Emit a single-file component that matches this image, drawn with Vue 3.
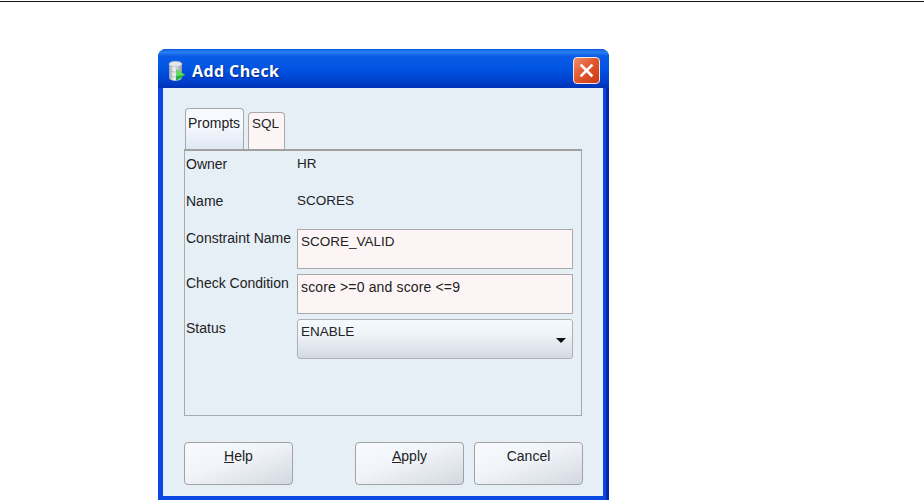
<template>
  <div class="page">
    <div class="rule"></div>

    <section class="window">
      <header class="titlebar">
        <svg class="app-icon" width="18" height="22" viewBox="0 0 18 22">
          <defs>
            <linearGradient id="can" x1="0" x2="1" y1="0" y2="0">
              <stop offset="0" stop-color="#9aa3ad" />
              <stop offset="0.4" stop-color="#f4f5f6" />
              <stop offset="1" stop-color="#8f98a3" />
            </linearGradient>
          </defs>
          <path d="M1 4v14c0 1.600 3 2.800 6.500 2.800S14 19.600 14 18V4z" fill="url(#can)" />
          <ellipse cx="7.500" cy="4" rx="6.500" ry="2.800" fill="#e3e6e9" stroke="#a9b0b8" stroke-width="0.600" />
          <path d="M1 10c1 1.400 3.600 2 6.500 2M1 15c1 1.400 3.600 2 6.500 2" fill="none" stroke="#a2a9b1" stroke-width="0.700" />
          <path d="M8 9 17 15l-9 6z" fill="#22b24c" />
          <path d="M8 9 17 15l-9 1z" fill="#63dc5e" />
        </svg>
        <span class="title">Add Check</span>
        <button class="close" type="button" aria-label="Close">
          <svg width="15" height="15" viewBox="0 0 15 15">
            <path d="M2.500 2.500 12.500 12.500M12.500 2.500 2.500 12.500" stroke="#fff" stroke-width="2.600" stroke-linecap="square" />
          </svg>
        </button>
      </header>

      <div class="body">
        <div class="tabs">
          <div class="tab active">Prompts</div>
          <div class="tab">SQL</div>
        </div>

        <div class="panel">
          <div class="row info owner">
            <span>Owner</span>
            <span class="caps">{{ owner }}</span>
          </div>
          <div class="row info name">
            <span>Name</span>
            <span class="caps">{{ table }}</span>
          </div>
          <div class="row">
            <label>Constraint Name</label>
            <div class="field caps">{{ constraintName }}</div>
          </div>
          <div class="row">
            <label>Check Condition</label>
            <div class="field spaced">{{ condition }}</div>
          </div>
          <div class="row">
            <label>Status</label>
            <div class="combo caps">
              <span>{{ status }}</span>
              <i class="arrow"></i>
            </div>
          </div>
        </div>

        <div class="actions">
          <button class="btn" type="button"><u>H</u>elp</button>
          <div class="right">
            <button class="btn" type="button"><u>A</u>pply</button>
            <button class="btn" type="button">Cancel</button>
          </div>
        </div>
      </div>
    </section>
  </div>
</template>

<script setup>
const owner = 'HR'
const table = 'SCORES'
const constraintName = 'SCORE_VALID'
const condition = 'score >=0 and score <=9'
const status = 'ENABLE'
</script>

<style>
html,
body {
  margin: 0;
  background: #fff;
  overflow: hidden;
}
</style>

<style scoped>
.page {
  width: 924px;
  height: 501px;
  overflow: hidden;
  font-family: "Liberation Sans", Arial, sans-serif;
  font-size: 14px;
  color: #222;
}

.rule {
  height: 1px;
  margin-top: 1px;
  background: #111;
}

.window {
  width: 451px;
  height: 451px;
  margin: 47px 0 0 158px;
  box-sizing: border-box;
  border-radius: 8px 8px 0 0;
  background: #0848e0;
  padding: 0 3px 4px 5px;
  border-right: 3px solid #0226ac;
  display: flex;
  flex-direction: column;
}

.titlebar {
  box-sizing: border-box;
  height: 39px;
  margin: 0 -6px 0 -5px;
  padding: 4px 9px 0 10px;
  display: flex;
  align-items: center;
  border-radius: 8px 8px 0 0;
  background: linear-gradient(180deg, #0a58e0 0%, #2a80f2 8%, #0a5ce6 18%, #0052e2 55%, #003ecb 85%, #0032b4 100%);
}

.app-icon {
  margin-right: 6px;
}

.title {
  color: #fff;
  font-family: "Open Sans", sans-serif;
  font-weight: 700;
  font-size: 16px;
  letter-spacing: 0.4px;
  text-shadow: 1px 1px 1px #0a2c8a;
}

.close {
  margin-left: auto;
  width: 27px;
  height: 27px;
  padding: 0;
  display: grid;
  place-items: center;
  border: 1px solid #f2e6e2;
  border-radius: 4px;
  background: linear-gradient(135deg, #ee8f6d 0%, #e2582f 45%, #c93a12 100%);
}

.body {
  flex: 1;
  background: #e6eef6;
  padding: 21px 20px 0 21px;
  display: flex;
  flex-direction: column;
}

.tabs {
  display: flex;
  align-items: flex-end;
  gap: 4px;
  height: 40px;
  padding-left: 1px;
  font-size: 13.5px;
}

.tab {
  box-sizing: border-box;
  width: 37px;
  height: 37px;
  padding: 3px 0 0 3px;
  border: 1px solid #a8a8a8;
  border-bottom: 0;
  border-radius: 4px 4px 0 0;
  background: #fdf5f5;
}

.tab.active {
  width: 59px;
  height: 41px;
  padding: 6px 0 0 2px;
  font-size: 14px;
  background: linear-gradient(180deg, #f6f9fd 40%, #dfe7f5 100%);
}

.panel {
  box-sizing: border-box;
  width: 398px;
  height: 267px;
  border: 1px solid #a9a9a9;
  border-top: 2px solid #a0a0a0;
  padding: 0 8px 0 1px;
}

.row {
  display: grid;
  grid-template-columns: 111px 1fr;
  margin-bottom: 5px;
}

.row.info {
  align-items: center;
  height: 37px;
  margin-bottom: 0;
}

.row.owner {
  margin-top: -6px;
}

.row.name {
  margin-bottom: 10px;
}

.row label {
  padding-top: 1px;
}

.caps {
  font-size: 13.5px;
}

.spaced {
  letter-spacing: 0.15px;
}

.field {
  box-sizing: border-box;
  height: 40px;
  padding: 4px 3px;
  border: 1px solid #a9a9a9;
  background: #fdf5f5;
}

.combo {
  box-sizing: border-box;
  height: 40px;
  padding: 4px 3px;
  border: 1px solid #b0b0b0;
  border-radius: 3px;
  background: linear-gradient(180deg, #f5fafe 0%, #eef3f8 40%, #d4dae2 100%);
  display: flex;
  justify-content: space-between;
}

.arrow {
  width: 0;
  height: 0;
  margin: 14px 3px 0 0;
  border-left: 5px solid transparent;
  border-right: 5px solid transparent;
  border-top: 5px solid #111;
}

.actions {
  display: flex;
  justify-content: space-between;
  margin-top: 26px;
  width: 399px;
}

.right {
  display: flex;
  gap: 10px;
}

.btn {
  box-sizing: border-box;
  width: 109px;
  height: 43px;
  padding: 0 0 15px;
  font: inherit;
  color: #222;
  border: 1px solid #a2a2a2;
  border-radius: 4px;
  background: linear-gradient(160deg, #f8fafe 0%, #f0f4f9 45%, #d3d8e0 100%);
}
</style>
